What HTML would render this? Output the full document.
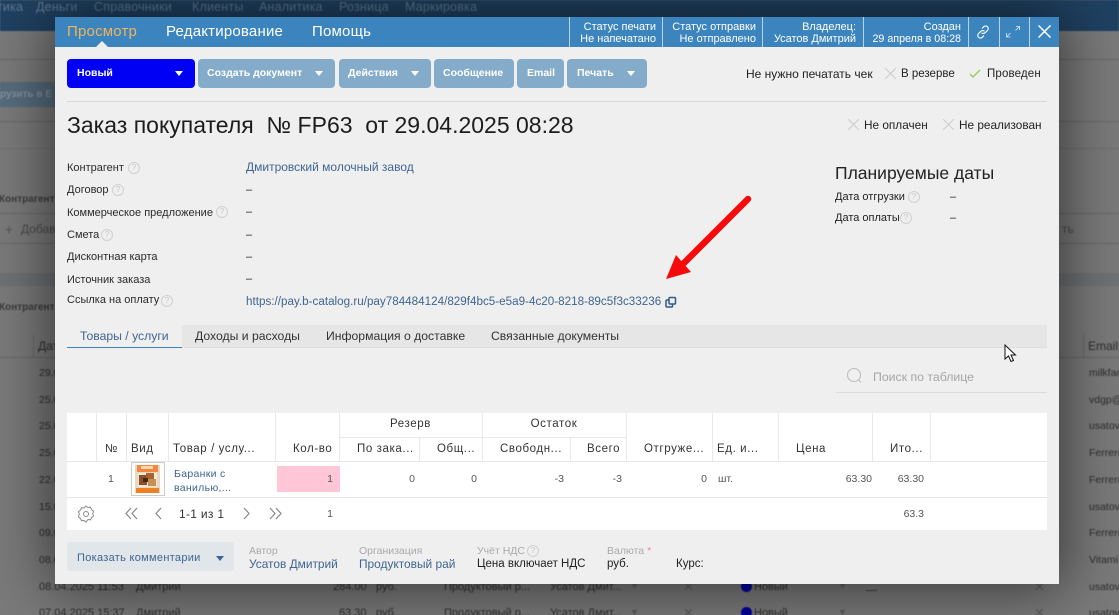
<!DOCTYPE html>
<html lang="ru"><head><meta charset="utf-8"><title>Заказ покупателя</title>
<style>
html,body{margin:0;padding:0;width:1119px;height:615px;overflow:hidden}
#w{position:absolute;left:0;top:0;width:1119px;height:615px;overflow:hidden;background:#7a7a7a;font-family:"Liberation Sans",sans-serif;font-size:11px;color:#222}
#bg{position:absolute;left:0;top:0;width:1119px;height:615px;filter:blur(.5px)}
.t{position:absolute;white-space:nowrap;line-height:14px}
.r{text-align:right}
.c{text-align:center}
.b{position:absolute}
.bg{color:#2e2e2e}
.modal{position:absolute;left:55px;top:17px;width:1004px;height:567px;background:#efefef;box-shadow:0 0 55px 5px rgba(0,0,0,.55)}
.ln{position:absolute;background:#686868;height:1px}
.btn{position:absolute;top:59px;height:29px;border-radius:4px;background:#84acca;color:#fff;font-weight:bold;font-size:10.500px;line-height:29px;white-space:nowrap;box-sizing:border-box}
.tri{position:absolute;width:0;height:0;border-left:4px solid transparent;border-right:4px solid transparent;border-top:5px solid #fff}
.hd{position:absolute;top:17px;width:1px;height:30px;background:#b9d3e7}
.ht{color:#fff;font-size:11px;line-height:12px;text-align:right;position:absolute;top:21px;white-space:nowrap}
.q{position:absolute;width:10px;height:10px;border:1px solid #d0d0d0;border-radius:50%;color:#c8c8c8;font-size:8px;line-height:10px;text-align:center}
.lb{font-size:11px;color:#2a2a2a}
.lk{color:#3f6590}
.v{position:absolute;background:#e9e9e9;width:1px}
.h{font-size:11.500px;letter-spacing:.6px;color:#333;top:442px}
.d{font-size:10.500px;color:#555;top:472px}
.x{position:absolute;font-size:13px;color:#5c5c5c;line-height:14px}
.s{font-size:10.500px;top:0}
</style></head><body><div id="w">

<!-- background -->
<div id="bg">
<div class="b" style="left:0;top:0;width:1119px;height:31px;background:#1f4161"></div>
<div class="t" style="left:-3px;top:0;font-size:12.500px;color:#5f7a93;letter-spacing:.2px">тика</div>
<div class="t" style="left:36px;top:0;font-size:12.500px;color:#5f7a93;letter-spacing:.2px">Деньги</div>
<div class="t" style="left:94px;top:0;font-size:12.500px;color:#5f7a93;letter-spacing:.2px">Справочники</div>
<div class="t" style="left:192px;top:0;font-size:12.500px;color:#5f7a93;letter-spacing:.2px">Клиенты</div>
<div class="t" style="left:259px;top:0;font-size:12.500px;color:#5f7a93;letter-spacing:.2px">Аналитика</div>
<div class="t" style="left:339px;top:0;font-size:12.500px;color:#5f7a93;letter-spacing:.2px">Розница</div>
<div class="t" style="left:405px;top:0;font-size:12.500px;color:#5f7a93;letter-spacing:.2px">Маркировка</div>
<div class="b" style="left:0;top:82px;width:60px;height:25px;background:#566c7e"></div>
<div class="t" style="left:0;top:88px;font-size:10px;font-weight:bold;color:#84919b">рузить в Е</div>
<div class="ln" style="left:0;top:59px;width:1119px"></div>
<div class="ln" style="left:0;top:121px;width:1119px"></div>
<div class="ln" style="left:0;top:148px;width:1119px;background:#717171"></div>
<div class="ln" style="left:0;top:213px;width:1119px"></div>
<div class="ln" style="left:0;top:243px;width:1119px"></div>
<div class="b" style="left:0;top:273px;width:1119px;height:13px;background:#6e7275"></div>
<div class="t" style="left:-1px;top:193px;font-size:10px;font-weight:bold;color:#3c3c3c">Контрагент</div>
<div class="t" style="left:-1px;top:301px;font-size:10px;font-weight:bold;color:#3c3c3c">Контрагент</div>
<div class="t" style="left:5px;top:222px;font-size:14px;color:#555">+</div>
<div class="t" style="left:21px;top:222px;font-size:12px;color:#4a4a4a">Добав</div>
<div class="t" style="left:1062px;top:222px;font-size:12px;color:#4a4a4a">ть</div>
<div class="t bg" style="left:38px;top:339px;font-size:12px">Дат</div>
<div class="t bg" style="left:1088px;top:339px;font-size:12px">Email</div>
<div class="ln" style="left:33px;top:335px;width:1px;height:22px"></div>
<div class="ln" style="left:1083px;top:335px;width:1px;height:22px"></div>
<div class="ln" style="left:0;top:357px;width:1119px"></div>
<div class="t bg" style="left:39px;top:366px;font-size:10.500px">29.0</div>
<div class="t bg" style="left:39px;top:393px;font-size:10.500px">25.0</div>
<div class="t bg" style="left:39px;top:419px;font-size:10.500px">25.0</div>
<div class="t bg" style="left:39px;top:446px;font-size:10.500px">25.0</div>
<div class="t bg" style="left:39px;top:473px;font-size:10.500px">22.0</div>
<div class="t bg" style="left:39px;top:500px;font-size:10.500px">15.0</div>
<div class="t bg" style="left:39px;top:526px;font-size:10.500px">09.0</div>
<div class="t bg" style="left:39px;top:553px;font-size:10.500px">08.0</div>
<div class="t bg" style="left:1089px;top:366px;font-size:10.500px">milkfac</div>
<div class="t bg" style="left:1089px;top:393px;font-size:10.500px">vdgp@</div>
<div class="t bg" style="left:1089px;top:419px;font-size:10.500px">usatov</div>
<div class="t bg" style="left:1089px;top:446px;font-size:10.500px">Ferrero</div>
<div class="t bg" style="left:1089px;top:473px;font-size:10.500px">Ferrero</div>
<div class="t bg" style="left:1089px;top:500px;font-size:10.500px">usatov</div>
<div class="t bg" style="left:1089px;top:526px;font-size:10.500px">Ferrero</div>
<div class="t bg" style="left:1089px;top:553px;font-size:10.500px">Vitami</div>
<div class="t bg" style="left:39px;top:580px;font-size:11px">08.04.2025 11:53</div>
<div class="t bg" style="left:136px;top:580px;font-size:11px">Дмитрий</div>
<div class="t bg" style="left:333px;top:580px;font-size:11px">284.00</div>
<div class="t bg" style="left:376px;top:580px;font-size:11px">руб.</div>
<div class="t bg" style="left:444px;top:580px;font-size:11px">Продуктовый р...</div>
<div class="t bg" style="left:550px;top:580px;font-size:11px">Усатов Дмит...</div>
<div class="x" style="left:630px;top:579px;font-size:9px">▼</div>
<div class="x" style="left:683px;top:580px">✕</div>
<div class="b" style="left:741px;top:581px;width:11px;height:11px;border-radius:50%;background:#00009c"></div>
<div class="t bg" style="left:754px;top:580px;font-size:11px">Новый</div>
<div class="x" style="left:838px;top:579px;font-size:9px">▼</div>
<div class="b" style="left:866px;top:590px;width:11px;height:1px;background:#444"></div>
<div class="x" style="left:1034px;top:580px">✕</div>
<div class="t bg" style="left:1089px;top:580px;font-size:10.500px">usatov</div>
<div class="t bg" style="left:39px;top:606px;font-size:11px">07.04.2025 15:37</div>
<div class="t bg" style="left:136px;top:606px;font-size:11px">Дмитрий</div>
<div class="t bg" style="left:339px;top:606px;font-size:11px">63.30</div>
<div class="t bg" style="left:376px;top:606px;font-size:11px">руб.</div>
<div class="t bg" style="left:444px;top:606px;font-size:11px">Продуктовый р...</div>
<div class="t bg" style="left:550px;top:606px;font-size:11px">Усатов Дмит...</div>
<div class="x" style="left:630px;top:605px;font-size:9px">▼</div>
<div class="x" style="left:683px;top:606px">✕</div>
<div class="b" style="left:741px;top:607px;width:11px;height:11px;border-radius:50%;background:#00009c"></div>
<div class="t bg" style="left:754px;top:606px;font-size:11px">Новый</div>
<div class="x" style="left:838px;top:605px;font-size:9px">▼</div>
<div class="x" style="left:1034px;top:606px">✕</div>
<div class="t bg" style="left:1089px;top:606px;font-size:10.500px">usatov</div>
</div>

<!-- modal -->
<div class="modal"></div>
<div class="b" style="left:55px;top:17px;width:1004px;height:30px;background:#3b84bd"></div>
<div class="b" style="left:96px;top:41px;width:0;height:0;border-left:6px solid transparent;border-right:6px solid transparent;border-bottom:6px solid #efefef"></div>
<div class="t" style="left:67px;top:24px;font-size:15px;line-height:16px;color:#eeb55d;letter-spacing:.2px">Просмотр</div>
<div class="t" style="left:166px;top:24px;font-size:15px;line-height:16px;color:#fff;letter-spacing:.2px">Редактирование</div>
<div class="t" style="left:312px;top:24px;font-size:15px;line-height:16px;color:#fff;letter-spacing:.2px">Помощь</div>

<div class="hd" style="left:569px"></div><div class="hd" style="left:662px"></div><div class="hd" style="left:762px"></div><div class="hd" style="left:863px"></div><div class="hd" style="left:968px"></div><div class="hd" style="left:999px"></div><div class="hd" style="left:1029px"></div>
<div class="ht" style="right:463px">Статус печати<br>Не напечатано</div>
<div class="ht" style="right:363px">Статус отправки<br>Не отправлено</div>
<div class="ht" style="right:263px">Владелец:<br>Усатов Дмитрий</div>
<div class="ht" style="right:158px">Создан<br><span style="font-size:10.700px">29 апреля в 08:28</span></div>
<svg class="b" style="left:975px;top:24px" width="16" height="16" viewBox="0 0 16 16" fill="none" stroke="#fff" stroke-width="1.100"><path d="M7 4.500l1.800-1.800a2.600 2.600 0 0 1 3.700 0 2.600 2.600 0 0 1 0 3.700L10.200 8.700a2.600 2.600 0 0 1-3.700 0"/><path d="M9 11.500l-1.800 1.800a2.600 2.600 0 0 1-3.700 0 2.600 2.600 0 0 1 0-3.700L5.800 7.300a2.600 2.600 0 0 1 3.700 0"/></svg>
<svg class="b" style="left:1005px;top:25px" width="16" height="15" viewBox="0 0 16 15" fill="none" stroke="#dbe9f4" stroke-width=".8"><path d="M11 1.500h3.500V5M14.500 1.500L10.500 5.500M1.500 8v4h4M1.500 12l4-4"/></svg>
<svg class="b" style="left:1037px;top:24px" width="15" height="15" viewBox="0 0 15 15" fill="none" stroke="#fff" stroke-width="1.500"><path d="M1.500 1.500l12 12M13.500 1.500l-12 12"/></svg>

<div class="btn" style="left:67px;width:128px;background:#0000f5;padding-left:10px">Новый<span class="tri" style="left:108px;top:12px"></span></div>
<div class="btn" style="left:198px;width:137px;padding-left:9px">Создать документ<span class="tri" style="left:117px;top:12px"></span></div>
<div class="btn" style="left:339px;width:92px;padding-left:9px">Действия<span class="tri" style="left:72px;top:12px"></span></div>
<div class="btn" style="left:434px;width:80px;padding-left:9px">Сообщение</div>
<div class="btn" style="left:517px;width:47px;padding-left:10px">Email</div>
<div class="btn" style="left:567px;width:80px;padding-left:10px">Печать<span class="tri" style="left:60px;top:12px"></span></div>

<div class="t" style="left:746px;top:67px;font-size:12px">Не нужно печатать чек</div>
<svg class="b" style="left:885px;top:68px" width="11" height="11" viewBox="0 0 11 11" stroke="#d0d0d0" stroke-width="1.200"><path d="M0 0l11 11M11 0L0 11"/></svg>
<div class="t" style="left:901px;top:67px;font-size:11.500px">В резерве</div>
<svg class="b" style="left:969px;top:68px" width="12" height="11" viewBox="0 0 12 11" fill="none" stroke="#9ccb68" stroke-width="1.500"><path d="M1 6l3 3 7-7"/></svg>
<div class="t" style="left:987px;top:67px;font-size:11.500px;letter-spacing:.15px">Проведен</div>

<div class="b" style="left:67px;top:101px;width:980px;height:1px;background:#d8d8d8"></div>
<div class="t" style="left:67px;top:112px;font-size:23px;line-height:26px;color:#1c1c1c;white-space:pre">Заказ покупателя  № FP63  от 29.04.2025 08:28</div>

<svg class="b" style="left:848px;top:119px" width="11" height="11" viewBox="0 0 11 11" stroke="#d0d0d0" stroke-width="1.200"><path d="M0 0l11 11M11 0L0 11"/></svg>
<div class="t" style="left:864px;top:118px;font-size:11.800px">Не оплачен</div>
<svg class="b" style="left:943px;top:119px" width="11" height="11" viewBox="0 0 11 11" stroke="#d0d0d0" stroke-width="1.200"><path d="M0 0l11 11M11 0L0 11"/></svg>
<div class="t" style="left:959px;top:118px;font-size:11.800px">Не реализован</div>

<div class="t lb" style="left:67px;top:161px">Контрагент</div><span class="q" style="left:128px;top:162px">?</span>
<div class="t lb" style="left:67px;top:183px">Договор</div><span class="q" style="left:112px;top:184px">?</span>
<div class="t lb" style="left:67px;top:206px">Коммерческое предложение</div><span class="q" style="left:216px;top:206px">?</span>
<div class="t lb" style="left:67px;top:228px">Смета</div><span class="q" style="left:101px;top:229px">?</span>
<div class="t lb" style="left:67px;top:250px">Дисконтная карта</div>
<div class="t lb" style="left:67px;top:273px">Источник заказа</div>
<div class="t lb" style="left:67px;top:293px">Ссылка на оплату</div><span class="q" style="left:161px;top:295px">?</span>

<div class="t lk" style="left:246px;top:160px;font-size:12px">Дмитровский молочный завод</div>
<div class="t" style="left:246px;top:183px">–</div>
<div class="t" style="left:246px;top:205px">–</div>
<div class="t" style="left:246px;top:228px">–</div>
<div class="t" style="left:246px;top:250px">–</div>
<div class="t" style="left:246px;top:272px">–</div>
<div class="t lk" style="left:246px;top:295px;font-size:11.670px">https://pay.b-catalog.ru/pay784484124/829f4bc5-e5a9-4c20-8218-89c5f3c33236</div>
<svg class="b" style="left:665px;top:296px" width="12" height="12" viewBox="0 0 12 12" fill="none" stroke="#2f5a8a" stroke-width="1.500"><rect x="4" y="1.500" width="6.500" height="6.500" rx="1"/><path d="M4 4H2a1 1 0 0 0-1 1v5a1 1 0 0 0 1 1h4.500a1 1 0 0 0 1-1V8.500"/></svg>

<div class="t" style="left:835px;top:163px;font-size:17.500px;line-height:20px">Планируемые даты</div>
<div class="t" style="left:835px;top:190px;font-size:11px">Дата отгрузки</div><span class="q" style="left:908px;top:191px">?</span>
<div class="t" style="left:950px;top:190px">–</div>
<div class="t" style="left:835px;top:211px;font-size:11px">Дата оплаты</div><span class="q" style="left:900px;top:212px">?</span>
<div class="t" style="left:950px;top:211px">–</div>

<svg class="b" style="left:660px;top:190px" width="100" height="95" viewBox="0 0 100 95"><path d="M88 9L24 73" stroke="#f50b0b" stroke-width="6.500" stroke-linecap="round" fill="none"/><path d="M6 89L16 65 31 82z" fill="#f50b0b"/></svg>

<!-- tabs -->
<div class="b" style="left:182px;top:325px;width:865px;height:23px;background:#e6e6e6;border-bottom:1px solid #dedede;box-sizing:border-box"></div>
<div class="b" style="left:67px;top:347px;width:115px;height:1px;background:#3b84bd"></div>
<div class="t" style="left:80px;top:329px;font-size:12.200px;color:#3f6590">Товары / услуги</div>
<div class="t" style="left:195px;top:329px;font-size:12.200px;color:#333">Доходы и расходы</div>
<div class="t" style="left:326px;top:329px;font-size:12.200px;color:#333">Информация о доставке</div>
<div class="t" style="left:491px;top:329px;font-size:12.200px;color:#333">Связанные документы</div>

<svg class="b" style="left:846px;top:367px" width="18" height="18" viewBox="0 0 18 18" fill="none" stroke="#bdbdbd" stroke-width="1.100"><circle cx="8" cy="8" r="6.500"/><path d="M12.800 13l2.200 2.500"/></svg>
<div class="t" style="left:873px;top:370px;font-size:12.300px;color:#a6a6a6">Поиск по таблице</div>
<div class="b" style="left:836px;top:392px;width:211px;height:1px;background:#dcdcdc"></div>

<div class="b" style="left:1004px;top:344px;width:14px;height:20px"><svg width="14" height="20" viewBox="0 0 14 20" fill="#fff" stroke="#111" stroke-width="1"><path d="M1 1v14l3.500-3 2.500 5.500 2.500-1L7 11h4.500z"/></svg></div>

<!-- table -->
<div class="b" style="left:67px;top:413px;width:980px;height:117px;background:#fff"></div>
<div class="b" style="left:67px;top:461px;width:980px;height:1px;background:#e6e6e6"></div>
<div class="b" style="left:67px;top:497px;width:980px;height:1px;background:#e6e6e6"></div>
<div class="b" style="left:339px;top:437px;width:287px;height:1px;background:#e9e9e9"></div>
<div class="v" style="left:96px;top:413px;height:48px"></div>
<div class="v" style="left:126px;top:413px;height:48px"></div>
<div class="v" style="left:168px;top:413px;height:48px"></div>
<div class="v" style="left:275px;top:413px;height:48px"></div>
<div class="v" style="left:339px;top:413px;height:48px"></div>
<div class="v" style="left:419px;top:437px;height:24px"></div>
<div class="v" style="left:482px;top:413px;height:48px"></div>
<div class="v" style="left:570px;top:437px;height:24px"></div>
<div class="v" style="left:626px;top:413px;height:48px"></div>
<div class="v" style="left:712px;top:413px;height:48px"></div>
<div class="v" style="left:778px;top:413px;height:48px"></div>
<div class="v" style="left:872px;top:413px;height:48px"></div>
<div class="v" style="left:930px;top:413px;height:48px"></div>

<div class="t c" style="left:339px;width:143px;top:417px;font-size:11.500px;letter-spacing:.6px;color:#333">Резерв</div>
<div class="t c" style="left:482px;width:144px;top:417px;font-size:11.500px;letter-spacing:.6px;color:#333">Остаток</div>
<div class="t h" style="left:105px;letter-spacing:0">№</div>
<div class="t h" style="left:131px">Вид</div>
<div class="t h" style="left:173px">Товар / услу...</div>
<div class="t h" style="left:293px">Кол-во</div>
<div class="t h" style="left:357px">По зака...</div>
<div class="t h" style="left:437px">Общ...</div>
<div class="t h" style="left:500px">Свободн...</div>
<div class="t h" style="left:587px">Всего</div>
<div class="t h" style="left:644px">Отгруже...</div>
<div class="t h" style="left:717px">Ед. и...</div>
<div class="t h" style="left:796px">Цена</div>
<div class="t h" style="left:890px">Ито...</div>

<div class="t d" style="left:108px">1</div>
<div class="b" style="left:131px;top:462px;width:34px;height:34px;border:1px solid #ccc;box-sizing:border-box;background:#fff"></div>
<svg class="b" style="left:134px;top:464px" width="27" height="30" viewBox="0 0 27 30"><rect x="1" y="1" width="25" height="28" fill="#ead7c2"/><rect x="3" y="1" width="21" height="7" fill="#f0893f"/><rect x="7" y="2" width="12" height="3" fill="#f7d9a8"/><rect x="4" y="9" width="19" height="14" fill="#f1e7da"/><rect x="5" y="11" width="8" height="10" fill="#8c4f22"/><rect x="12" y="9" width="8" height="7" fill="#a8642e"/><rect x="14" y="15" width="8" height="7" fill="#c79050"/><rect x="9" y="14" width="5" height="4" fill="#3f2a1c"/><rect x="2" y="24" width="23" height="5" fill="#f07f22"/></svg>
<div class="t lk" style="left:174px;top:467px;font-size:10.500px;line-height:14px;letter-spacing:.3px">Баранки с<br>ванилью,...</div>
<div class="b" style="left:277px;top:466px;width:63px;height:26px;background:#ffc6d8"></div>
<div class="t r d" style="right:786px">1</div>
<div class="t r d" style="right:704px">0</div>
<div class="t r d" style="right:642px">0</div>
<div class="t r d" style="right:555px">-3</div>
<div class="t r d" style="right:497px">-3</div>
<div class="t r d" style="right:412px">0</div>
<div class="t d" style="left:718px">шт.</div>
<div class="t r d" style="right:247px">63.30</div>
<div class="t r d" style="right:195px">63.30</div>

<svg class="b" style="left:77px;top:505px" width="18" height="18" viewBox="0 0 18 18" fill="none" stroke="#8a8a8a" stroke-width="1"><path d="M9 1l2 1.500 2.500-.3 1 2.300 2 1.500-.8 2.500.8 2.500-2 1.500-1 2.300-2.500-.3L9 17l-2-1.500-2.500.3-1-2.300-2-1.500L2.300 9 1.500 6.500l2-1.500 1-2.300 2.500.3z"/><circle cx="9" cy="9" r="2.500"/></svg>
<svg class="b" style="left:124px;top:507px" width="16" height="13" viewBox="0 0 16 13" fill="none" stroke="#888" stroke-width="1.200"><path d="M7 1L2 6.500 7 12M13 1L8 6.500 13 12"/></svg>
<svg class="b" style="left:154px;top:507px" width="9" height="13" viewBox="0 0 9 13" fill="none" stroke="#888" stroke-width="1.200"><path d="M7 1L2 6.500 7 12"/></svg>
<div class="t" style="left:179px;top:507px;font-size:12px;color:#333;letter-spacing:.3px">1-1 из 1</div>
<svg class="b" style="left:242px;top:507px" width="9" height="13" viewBox="0 0 9 13" fill="none" stroke="#888" stroke-width="1.200"><path d="M2 1l5 5.500L2 12"/></svg>
<svg class="b" style="left:267px;top:507px" width="16" height="13" viewBox="0 0 16 13" fill="none" stroke="#888" stroke-width="1.200"><path d="M3 1l5 5.500L3 12M9 1l5 5.500L9 12"/></svg>
<div class="t r d" style="right:786px;top:507px">1</div>
<div class="t r d" style="right:195px;top:507px">63.3</div>

<!-- bottom -->
<div class="b" style="left:67px;top:542px;width:167px;height:29px;background:#e1e6ea;border-radius:3px"></div>
<div class="t lk" style="left:77px;top:551px;font-size:11px;letter-spacing:.3px">Показать комментарии</div>
<span class="tri" style="left:216px;top:556px;border-top-color:#3f6590"></span>
<div class="t" style="left:249px;top:544px;font-size:10.500px;color:#aaa">Автор</div>
<div class="t lk" style="left:249px;top:557px;font-size:11.900px">Усатов Дмитрий</div>
<div class="t" style="left:359px;top:544px;font-size:10.500px;color:#aaa">Организация</div>
<div class="t lk" style="left:359px;top:557px;font-size:11.900px">Продуктовый рай</div>
<div class="t" style="left:477px;top:544px;font-size:10.500px;color:#aaa">Учёт НДС</div><span class="q" style="left:527px;top:545px">?</span>
<div class="t" style="left:477px;top:557px;font-size:11.500px;color:#222">Цена включает НДС</div>
<div class="t" style="left:607px;top:544px;font-size:10.500px;color:#aaa">Валюта <span style="color:#f08a9a">*</span></div>
<div class="t" style="left:607px;top:557px;font-size:11.500px;color:#222">руб.</div>
<div class="t" style="left:676px;top:557px;font-size:11.500px;color:#222">Курс:</div>
</div></body></html>
